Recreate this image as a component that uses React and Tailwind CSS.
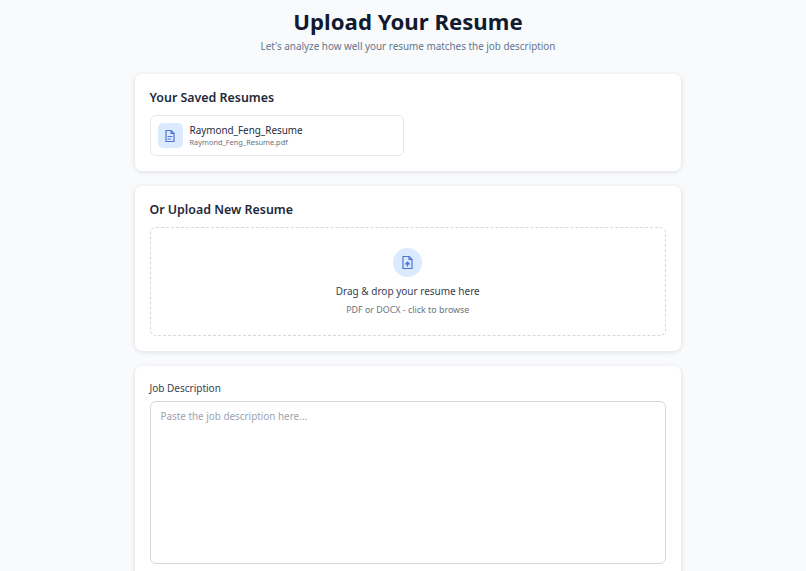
function SavedFileIcon() {
  return (
    <svg width="14" height="14" viewBox="0 0 14 14" fill="none" stroke="#4f74d9" strokeWidth="1.2" strokeLinejoin="round" strokeLinecap="round">
      <path d="M3 1.5h5l3 3v8H3z" />
      <path d="M8 1.5v3h3" />
      <path d="M5 7.5h4M5 10h2.5" />
    </svg>
  );
}

function UploadFileIcon() {
  return (
    <svg width="15" height="15" viewBox="0 0 15 15" fill="none" stroke="#4f74d9" strokeWidth="1.2" strokeLinejoin="round" strokeLinecap="round">
      <path d="M3 1.5h6l3 3v9H3z" />
      <path d="M9 1.5v3h3" />
      <path d="M7.5 11V7.5M5.8 9l1.7-1.7L9.2 9" strokeWidth="1.4" />
    </svg>
  );
}

export default function App() {
  return (
    <div className="h-screen overflow-hidden bg-[#f8fafc] font-['Noto_Sans',sans-serif]">
      <div className="w-[546px] ml-[135px] pt-[5px]">
        <div className="text-center mb-[21px]">
          <h1 className="text-[22.2px] leading-[34px] font-bold text-[#111a2e]">Upload Your Resume</h1>
          <p className="text-[9.9px] leading-[14px] text-[#64748b]">Let's analyze how well your resume matches the job description</p>
        </div>

        <div className="bg-white rounded-[7px] shadow-[0_1px_5px_rgba(15,23,42,0.12)] pl-[14.5px] pr-[15px] py-[15px] mb-[15px]">
          <h2 className="text-[12.4px] leading-[17px] font-semibold text-[#1e293b] mb-[9px]">Your Saved Resumes</h2>
          <div className="w-[254.5px] h-[41px] border-[1.5px] border-[#e5e7eb] rounded-[6px] flex items-center gap-[7px] px-[7px]">
            <div className="w-[25px] h-[25px] rounded-[5px] bg-[#dbeafe] flex items-center justify-center">
              <SavedFileIcon />
            </div>
            <div>
              <div className="text-[9.9px] leading-[14px] text-[#1e293b]">Raymond_Feng_Resume</div>
              <div className="text-[7.4px] leading-[11px] text-[#6b7280]">Raymond_Feng_Resume.pdf</div>
            </div>
          </div>
        </div>

        <div className="bg-white rounded-[7px] shadow-[0_1px_5px_rgba(15,23,42,0.12)] pl-[14.5px] pr-[15px] py-[15px] mb-[15px]">
          <h2 className="text-[12.4px] leading-[17px] font-semibold text-[#1e293b] mb-[9px]">Or Upload New Resume</h2>
          <div className="h-[109px] border-[1.5px] border-dashed border-[#d4d8de] rounded-[6px] flex flex-col items-center pt-[19.5px]">
            <div className="w-[29px] h-[29px] rounded-full bg-[#dbeafe] flex items-center justify-center">
              <UploadFileIcon />
            </div>
            <p className="text-[10px] leading-[14px] mt-[7px] text-[#374151]">Drag &amp; drop your resume here</p>
            <p className="text-[8.9px] leading-[13px] mt-[5.5px] text-[#6b7280]">PDF or DOCX - click to browse</p>
          </div>
        </div>

        <div className="bg-white rounded-[7px] shadow-[0_1px_5px_rgba(15,23,42,0.12)] pl-[14.5px] pr-[15px] py-[15px]">
          <label className="block text-[10px] leading-[14px] text-[#374151] mb-[6px]">Job Description</label>
          <textarea
            placeholder="Paste the job description here..."
            className="block w-full h-[163px] border-[1.5px] border-[#d4d8de] rounded-[6px] px-[10px] py-[7px] text-[9.9px] leading-[14px] placeholder:text-[#9ca3af] resize-none outline-none"
          />
        </div>
      </div>
    </div>
  );
}
